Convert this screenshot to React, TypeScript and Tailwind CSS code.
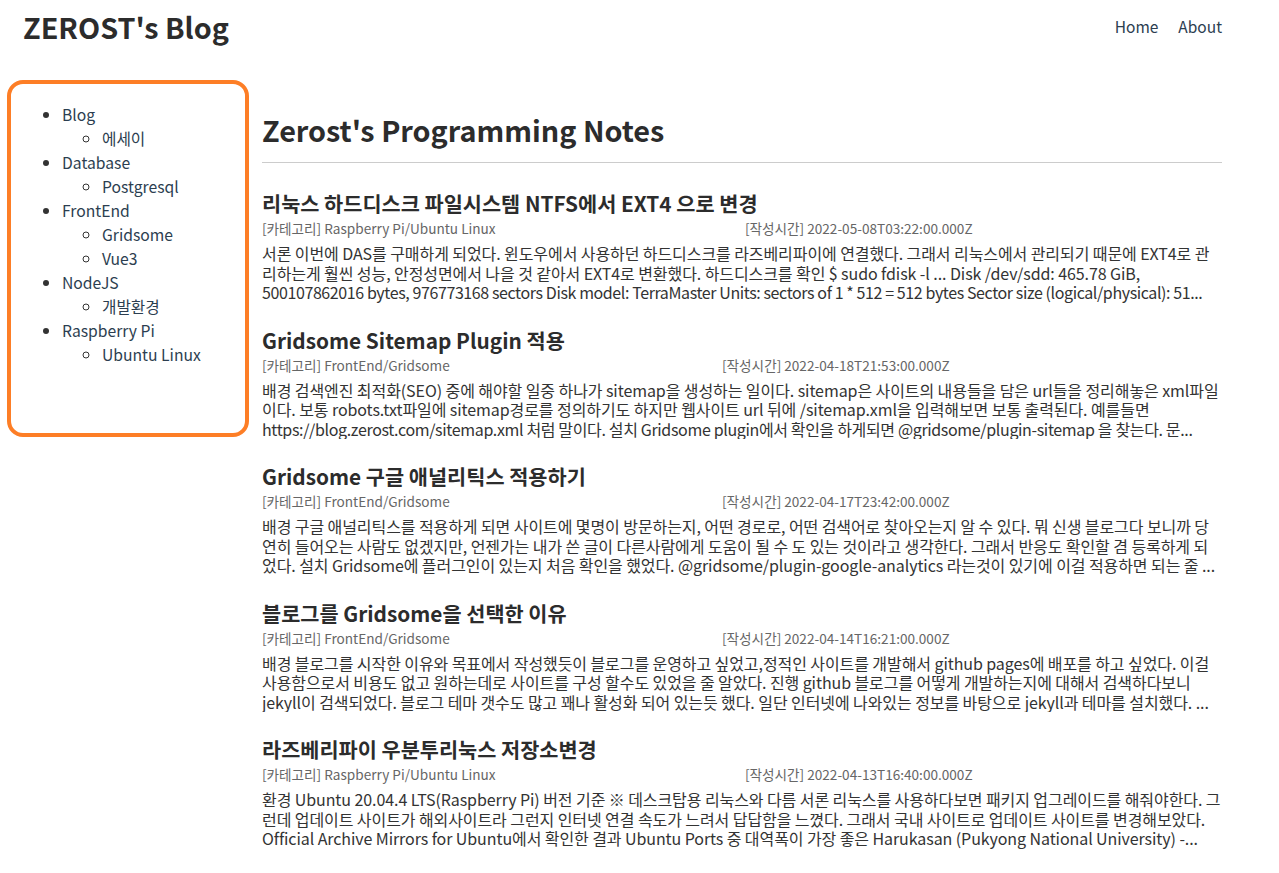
import React from "react";

type Post = {
  title: string;
  category: string;
  time: string;
  body: string;
  tail?: string;
  tailClass?: string;
};

const posts: Post[] = [
  {
    title: "리눅스 하드디스크 파일시스템 NTFS에서 EXT4 으로 변경",
    category: "Raspberry Pi/Ubuntu Linux",
    time: "2022-05-08T03:22:00.000Z",
    body: "서론 이번에 DAS를 구매하게 되었다. 윈도우에서 사용하던 하드디스크를 라즈베리파이에 연결했다. 그래서 리눅스에서 관리되기 때문에 EXT4로 관리하는게 훨씬 성능, 안정성면에서 나을 것 같아서 EXT4로 변환했다. 하드디스크를 확인 $ sudo fdisk -l ... Disk /dev/sdd: 465.78 GiB, ",
    tail: "500107862016 bytes, 976773168 sectors Disk model: TerraMaster Units: sectors of 1 * 512 = 512 bytes Sector size (logical/physical): 51...",
    tailClass: "tracking-[-0.4px]",
  },
  {
    title: "Gridsome Sitemap Plugin 적용",
    category: "FrontEnd/Gridsome",
    time: "2022-04-18T21:53:00.000Z",
    body: "배경 검색엔진 최적화(SEO) 중에 해야할 일중 하나가 sitemap을 생성하는 일이다. sitemap은 사이트의 내용들을 담은 url들을 정리해놓은 xml파일이다. 보통 robots.txt파일에 sitemap경로를 정의하기도 하지만 웹사이트 url 뒤에 /sitemap.xml을 입력해보면 보통 출력된다. 예를들면 ",
    tail: "https://blog.zerost.com/sitemap.xml 처럼 말이다. 설치 Gridsome plugin에서 확인을 하게되면 @gridsome/plugin-sitemap 을 찾는다. 문...",
    tailClass: "tracking-[-0.35px]",
  },
  {
    title: "Gridsome 구글 애널리틱스 적용하기",
    category: "FrontEnd/Gridsome",
    time: "2022-04-17T23:42:00.000Z",
    body: "배경 구글 애널리틱스를 적용하게 되면 사이트에 몇명이 방문하는지, 어떤 경로로, 어떤 검색어로 찾아오는지 알 수 있다. 뭐 신생 블로그다 보니까 당연히 들어오는 사람도 없겠지만, 언젠가는 내가 쓴 글이 다른사람에게 도움이 될 수 도 있는 것이라고 생각한다. 그래서 반응도 확인할 겸 등록하게 되었다. 설치 Gridsome에 플러그인이 있는지 처음 확인을 했었다. @gridsome/plugin-google-analytics 라는것이 있기에 이걸 적용하면 되는 줄 ...",
  },
  {
    title: "블로그를 Gridsome을 선택한 이유",
    category: "FrontEnd/Gridsome",
    time: "2022-04-14T16:21:00.000Z",
    body: "배경 블로그를 시작한 이유와 목표에서 작성했듯이 블로그를 운영하고 싶었고,정적인 사이트를 개발해서 github pages에 배포를 하고 싶었다. 이걸 사용함으로서 비용도 없고 원하는데로 사이트를 구성 할수도 있었을 줄 알았다. 진행 github 블로그를 어떻게 개발하는지에 대해서 검색하다보니 jekyll이 검색되었다. 블로그 테마 갯수도 많고 꽤나 활성화 되어 있는듯 했다. 일단 인터넷에 나와있는 정보를 바탕으로 jekyll과 테마를 설치했다. ...",
  },
  {
    title: "라즈베리파이 우분투리눅스 저장소변경",
    category: "Raspberry Pi/Ubuntu Linux",
    time: "2022-04-13T16:40:00.000Z",
    body: "환경 Ubuntu 20.04.4 LTS(Raspberry Pi) 버전 기준 ※ 데스크탑용 리눅스와 다름 서론 리눅스를 사용하다보면 패키지 업그레이드를 해줘야한다. 그런데 업데이트 사이트가 해외사이트라 그런지 인터넷 연결 속도가 느려서 답답함을 느꼈다. 그래서 국내 사이트로 업데이트 사이트를 변경해보았다. Official Archive Mirrors for Ubuntu에서 확인한 결과 Ubuntu Ports 중 대역폭이 가장 좋은 Harukasan (Pukyong National University) -...",
  },
];

const categories = [
  { name: "Blog", subs: ["에세이"] },
  { name: "Database", subs: ["Postgresql"] },
  { name: "FrontEnd", subs: ["Gridsome", "Vue3"] },
  { name: "NodeJS", subs: ["개발환경"] },
  { name: "Raspberry Pi", subs: ["Ubuntu Linux"] },
];

export default function App() {
  return (
    <div
      className="min-h-[873px] w-[1279px] bg-white text-[#333]"
      style={{ fontFamily: '"Noto Sans CJK KR", "Noto Sans", sans-serif' }}
    >
      <header className="flex h-[56px] items-center justify-between pb-[2px] pl-[23px] pr-[57px]">
        <h1 className="text-[28.8px] leading-[40px] font-bold text-[#2c2c2c]">ZEROST's Blog</h1>
        <nav className="flex gap-[20px] text-[15.5px] text-[#2c3e50]">
          <a>Home</a>
          <a>About</a>
        </nav>
      </header>
      <div className="flex items-start">
        <aside className="ml-[7px] mt-[24px] h-[357px] w-[242px] shrink-0 rounded-[16px] border-[4px] border-[#fd7e26] pt-[19px] pl-[11px]">
          <ul className="list-disc pl-[40px] text-[15.7px] leading-[24px] text-[#2c3e50] marker:text-[#333]">
            {categories.map((c) => (
              <li key={c.name}>
                {c.name}
                <ul className="list-[circle] pl-[40px]">
                  {c.subs.map((s) => (
                    <li key={s}>{s}</li>
                  ))}
                </ul>
              </li>
            ))}
          </ul>
        </aside>
        <main className="ml-[13px] mt-[54px] w-[960px]">
          <h2 className="text-[28.8px] leading-[40px] font-bold text-[#2c2c2c]">Zerost's Programming Notes</h2>
          <div className="mt-[12px] h-px bg-[#ccc]" />
          <div className="mt-[27px]">
            {posts.map((p) => (
              <article key={p.title} className="mb-[24px]">
                <h3 className="text-[20.8px] leading-[26px] font-bold text-[#2c2c2c]">{p.title}</h3>
                <div className="mt-[2px] flex text-[13.6px] leading-[20px] text-[#666]">
                  <span>[카테고리] {p.category}</span>
                  <span className="flex flex-1 justify-center">
                    <span>[작성시간] {p.time}</span>
                  </span>
                </div>
                <p className="mt-[6px] line-clamp-3 text-[16px] leading-[19.5px] tracking-[-0.08px] text-[#333]">
                  {p.body}
                  {p.tail ? <span className={p.tailClass}>{p.tail}</span> : null}
                </p>
              </article>
            ))}
          </div>
        </main>
      </div>
    </div>
  );
}
